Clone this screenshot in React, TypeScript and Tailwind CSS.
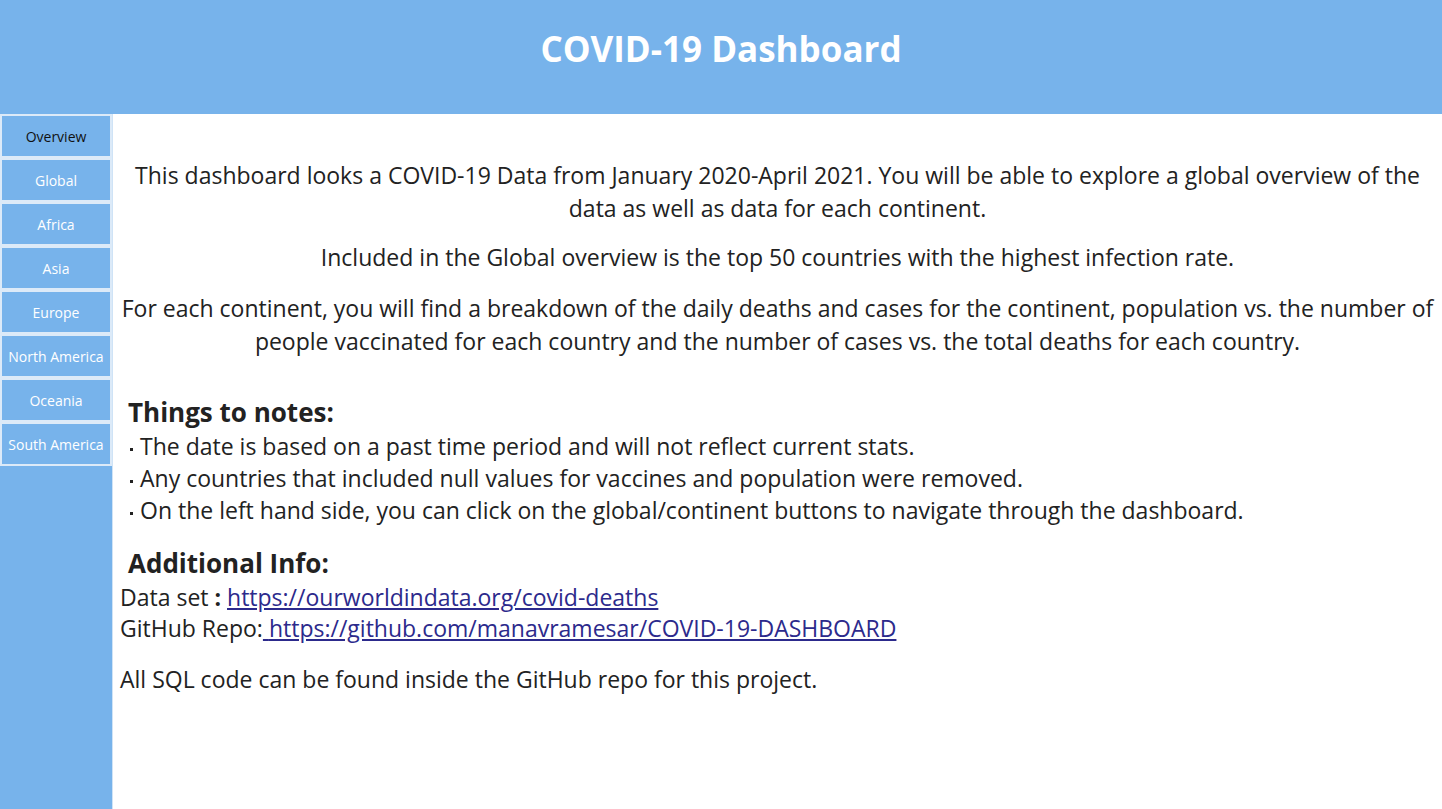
import React from 'react';

const NAV = ['Overview', 'Global', 'Africa', 'Asia', 'Europe', 'North America', 'Oceania', 'South America'];

const NOTES = [
  'The date is based on a past time period and will not reflect current stats.',
  'Any countries that included null values for vaccines and population were removed.',
  'On the left hand side, you can click on the global/continent buttons to navigate through the dashboard.',
];

export default function App() {
  return (
    <div className="min-h-screen bg-white text-[#222222]" style={{ fontFamily: '"Open Sans", "Noto Sans", sans-serif' }}>
      <header className="h-[114px] bg-[#77b3eb] pt-[24px] text-center">
        <h1 className="text-[35px] font-bold leading-[50px] text-white">COVID-19 Dashboard</h1>
      </header>

      <div className="flex min-h-[695px]">
        <aside className="w-[113px] shrink-0 bg-[#77b3eb] border-r border-[#cfe3f6]">
          {NAV.map((item, i) => (
            <button
              key={item}
              className={`block h-[44px] w-[112px] border-2 border-[#dceaf8] bg-[#77b3eb] text-[14px] ${
                i === 0 ? 'text-[#111111]' : 'text-white'
              }`}
            >
              {item}
            </button>
          ))}
        </aside>

        <main className="flex-1 px-[7px] pt-[45px] text-[23px] leading-[33px]">
          <div className="text-center">
            <p>
              This dashboard looks a COVID-19 Data from January 2020-April 2021. You will be able to explore a global
              overview of the data as well as data for each continent.
            </p>
            <p className="mt-[16px]">Included in the Global overview is the top 50 countries with the highest infection rate.</p>
            <p className="mt-[18px]">
              For each continent, you will find a breakdown of the daily deaths and cases for the continent, population
              vs. the number of people vaccinated for each country and the number of cases vs. the total deaths for each
              country.
            </p>
          </div>

          <h2 className="mt-[36px] pl-[8px] text-[26px] font-bold leading-[36px]">Things to notes:</h2>
          <ul className="pl-[10px] leading-[32px]">
            {NOTES.map((note) => (
              <li key={note} className="flex items-center">
                <span className="mr-[7px] mt-[6px] inline-block h-[3px] w-[3px] bg-[#222222]" />
                {note}
              </li>
            ))}
          </ul>

          <h2 className="mt-[20px] pl-[8px] text-[26px] font-bold leading-[34px]">Additional Info:</h2>
          <p className="mt-[2px] leading-[31px]">
            Data set <b>:</b>{' '}
            <a href="#" className="text-[#2c2a8c] underline">
              https://ourworldindata.org/covid-deaths
            </a>
          </p>
          <p className="leading-[31px]">
            GitHub Repo:
            <a href="#" className="text-[#2c2a8c] underline">
              {' '}https://github.com/manavramesar/COVID-19-DASHBOARD
            </a>
          </p>
          <p className="mt-[20px] leading-[31px]">All SQL code can be found inside the GitHub repo for this project.</p>
        </main>
      </div>
    </div>
  );
}
